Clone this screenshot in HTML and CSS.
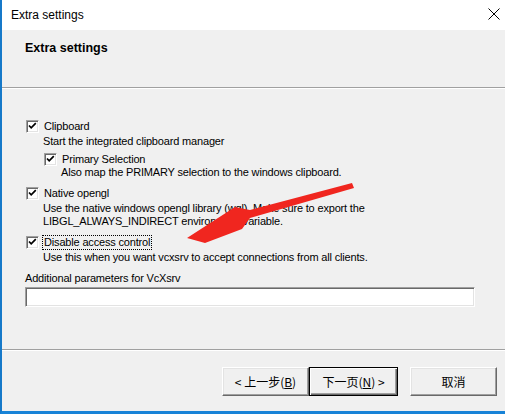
FILE: index.html
```html
<!DOCTYPE html>
<html>
<head>
<meta charset="utf-8">
<link rel="stylesheet" href="styles.css">
</head>
<body>
<div class="window">
  <div class="titlebar">
    <span class="title">Extra settings</span>
    <svg class="close" width="12" height="12" viewBox="0 0 12 12"><path d="M0.5 0.5 L11.5 11.5 M11.5 0.5 L0.5 11.5" stroke="#000" stroke-width="1" fill="none"/></svg>
  </div>
  <div class="header"><div class="heading">Extra settings</div></div>
  <div class="content">
    <div class="group">
      <div class="row"><span class="box"><svg viewBox="0 0 13 13" width="13" height="13"><path d="M3 5.5 L5.2 7.8 L9.8 3.2" stroke="#000" stroke-width="1.7" fill="none"/></svg></span><span class="label">Clipboard</span></div>
      <div class="desc">Start the integrated clipboard manager</div>
      <div class="sub">
        <div class="row"><span class="box"><svg viewBox="0 0 13 13" width="13" height="13"><path d="M3 5.5 L5.2 7.8 L9.8 3.2" stroke="#000" stroke-width="1.7" fill="none"/></svg></span><span class="label">Primary Selection</span></div>
        <div class="desc tight">Also map the PRIMARY selection to the windows clipboard.</div>
      </div>
    </div>
    <div class="group">
      <div class="row"><span class="box"><svg viewBox="0 0 13 13" width="13" height="13"><path d="M3 5.5 L5.2 7.8 L9.8 3.2" stroke="#000" stroke-width="1.7" fill="none"/></svg></span><span class="label">Native opengl</span></div>
      <div class="desc">Use the native windows opengl library (wgl). Make sure to export the<br>LIBGL_ALWAYS_INDIRECT environment variable.</div>
    </div>
    <div class="group">
      <div class="row"><span class="box"><svg viewBox="0 0 13 13" width="13" height="13"><path d="M3 5.5 L5.2 7.8 L9.8 3.2" stroke="#000" stroke-width="1.7" fill="none"/></svg></span><span class="label focus">Disable access control</span></div>
      <div class="desc">Use this when you want vcxsrv to accept connections from all clients.</div>
    </div>
    <div class="param-label">Additional parameters for VcXsrv</div>
    <div class="param"></div>
  </div>
  <div class="footer">
    <div class="btn-pair">
      <div class="btn">&lt; 上一步(<u>B</u>)</div>
      <div class="btn default">下一页(<u>N</u>) &gt;</div>
    </div>
    <div class="btn">取消</div>
  </div>
  <svg class="arrow" width="505" height="414" viewBox="0 0 505 414"><polygon points="352,183 250,210 235,207 187,238 205,243 242,229 250,218 354,188" fill="#f0261f"/></svg>
</div>
</body>
</html>
```
FILE: styles.css
```css
html, body { margin: 0; padding: 0; }
body { width: 505px; height: 414px; overflow: hidden; background: #f0f0f0; }
.window {
  position: relative;
  width: 503px;
  height: 411px;
  border-left: 2px solid #1679c9;
  border-bottom: 3px solid #1883d7;
  background: #f0f0f0;
  display: flex;
  flex-direction: column;
  font-family: "Liberation Sans", Arial, sans-serif;
  font-size: 11px;
  letter-spacing: -0.17px;
  color: #000;
}
.titlebar {
  height: 29px;
  background: #fff;
  display: flex;
  align-items: center;
  justify-content: space-between;
  padding: 0 5px 1px 9px;
  flex-shrink: 0;
  letter-spacing: 0;
}
.title { font-size: 12px; font-family: "Liberation Sans", Arial, sans-serif; }
.close { display: block; margin-bottom: 2px; }
.header {
  height: 58px;
  border-bottom: 1px solid #a0a0a0;
  box-shadow: 0 1px 0 #fff;
  padding: 12px 0 0 23px;
  box-sizing: border-box;
  flex-shrink: 0;
  letter-spacing: 0;
}
.heading { font-weight: bold; font-size: 12.5px; line-height: 13px; }
.content {
  height: 260px;
  margin-top: 1px;
  padding: 30px 0 0 24px;
  box-sizing: border-box;
  flex-shrink: 0;
}
.group { margin-bottom: 7px; }
.row { display: flex; align-items: center; height: 14px; }
.box {
  width: 13px; height: 13px; box-sizing: border-box;
  background: #fff;
  border-top: 1px solid #a0a0a0; border-left: 1px solid #a0a0a0;
  border-right: 1px solid #fff; border-bottom: 1px solid #fff;
  box-shadow: inset 1px 1px 0 #696969, inset -1px -1px 0 #e3e3e3;
  position: relative;
  flex-shrink: 0;
}
.box svg { position: absolute; left: -1px; top: -1px; }
.label { margin-left: 3px; padding: 0 1px; border: 1px dotted transparent; line-height: 13px; }
.label.focus { border-color: #000; }
.desc { margin-left: 17px; line-height: 13px; margin-top: 2px; }
.desc.tight { margin-top: 0; }
.sub { margin-left: 18px; margin-top: 4px; }
.sub .desc { margin-left: 17px; }
.param-label { line-height: 13px; margin-top: 8px; margin-left: -1px; }
.param {
  margin-top: 2px;
  margin-left: -1px;
  width: 450px; height: 20px; box-sizing: border-box;
  background: #fff;
  border-top: 1px solid #a0a0a0; border-left: 1px solid #a0a0a0;
  border-right: 1px solid #fff; border-bottom: 1px solid #fff;
  box-shadow: inset 1px 1px 0 #696969, inset -1px -1px 0 #e3e3e3;
}
.footer {
  flex: 1;
  border-top: 1px solid #a0a0a0;
  box-shadow: inset 0 1px 0 #fff;
  display: flex;
  justify-content: flex-end;
  align-items: flex-start;
  padding: 17px 8px 0 0;
  gap: 12px;
  letter-spacing: 0;
}
.btn-pair { display: flex; gap: 0; }
.btn {
  width: 87px; height: 29px; box-sizing: border-box;
  background: #f0f0f0;
  border-top: 1px solid #fff; border-left: 1px solid #fff;
  border-right: 1px solid #696969; border-bottom: 1px solid #696969;
  box-shadow: inset -1px -1px 0 #a0a0a0, inset 1px 1px 0 #e3e3e3;
  display: flex; align-items: center; justify-content: center;
  font-family: "Noto Sans CJK SC", sans-serif;
  font-size: 12px;
}
.btn.default {
  width: 89px;
  border: 1px solid #000;
  box-shadow: inset 1px 1px 0 #fff, inset -1px -1px 0 #696969, inset -2px -2px 0 #a0a0a0;
}
.btn u { text-decoration: underline; text-underline-offset: 1px; }
.arrow { position: absolute; left: -2px; top: 0; pointer-events: none; }
```
